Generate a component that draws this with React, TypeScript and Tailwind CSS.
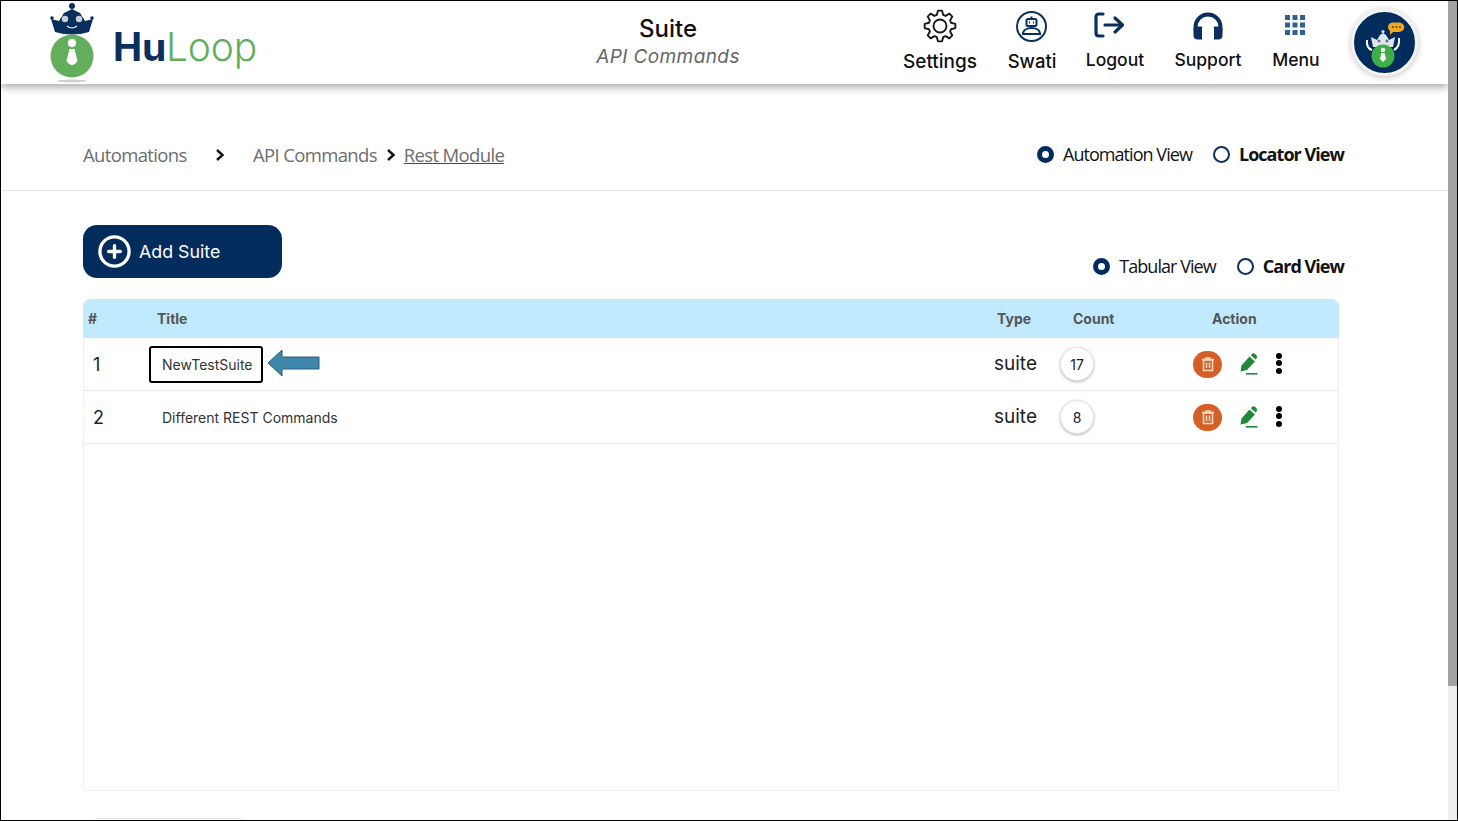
import { CirclePlus } from "lucide-react";

const POP = "font-['Inter','Liberation_Sans',sans-serif]";
const OPEN = "font-['Open_Sans','Liberation_Sans',sans-serif]";

const gearPath = () => {
  const pts: string[] = [];
  const teeth = 8;
  for (let i = 0; i < teeth; i++) {
    const a = (i / teeth) * Math.PI * 2;
    const step = (Math.PI * 2) / teeth;
    const at = (r: number, t: number) => `${(17 + r * Math.cos(t)).toFixed(2)} ${(17 + r * Math.sin(t)).toFixed(2)}`;
    pts.push(`${i === 0 ? "M" : "L"}${at(11.5, a - step * 0.36)}`);
    pts.push(`L${at(15.5, a - step * 0.17)}`);
    pts.push(`L${at(15.5, a + step * 0.17)}`);
    pts.push(`L${at(11.5, a + step * 0.36)}`);
  }
  return pts.join(" ") + " Z";
};

const GearIcon = () => (
  <svg width="34" height="34" viewBox="0 0 34 34" fill="none" stroke="#1a1a1a" strokeWidth="1.900" strokeLinejoin="round">
    <path d={gearPath()} />
    <circle cx="17" cy="17" r="6.500" />
  </svg>
);

const LogoMark = () => (
  <svg width="50" height="84" viewBox="0 0 50 84">
    <circle cx="22" cy="5" r="3" fill="#0b2f5c" />
    <path d="M1 18 L9 20 L14 12 L22 8 L30 12 L35 20 L43 18 L39 31 Q22 36 5 31 Z" fill="#0b2f5c" />
    <circle cx="2" cy="17" r="1.800" fill="#0b2f5c" />
    <circle cx="42" cy="17" r="1.800" fill="#0b2f5c" />
    <circle cx="15" cy="18" r="3.200" fill="#c9d3df" />
    <circle cx="29" cy="18" r="3.200" fill="#c9d3df" />
    <path d="M17 25 Q22 29 27 25" stroke="#fff" strokeWidth="1.200" fill="none" />
    <circle cx="22" cy="55" r="21.500" fill="#62ae5c" />
    <circle cx="22" cy="42" r="4.200" fill="#fff" />
    <path d="M19.500 48 L24.500 48 L27.500 60 Q22 68 16.500 60 Z" fill="#fff" />
    <ellipse cx="22" cy="80" rx="15" ry="1.500" fill="#d0d0d0" />
  </svg>
);

const SwatiIcon = () => (
  <svg width="33" height="33" viewBox="0 0 33 33" fill="none" stroke="#0b2f5c" strokeWidth="2" className="mr-[2px]">
    <circle cx="16.500" cy="16.500" r="14.500" />
    <rect x="11.500" y="9" width="10" height="7" rx="1.500" />
    <path d="M16.500 6.500v2.500" />
    <path d="M14 12.500h1M18 12.500h1" />
    <path d="M8 24c0-4 4-6 8.500-6s8.500 2 8.500 6z" />
  </svg>
);

const LogoutIcon = () => (
  <svg width="31" height="26" viewBox="0 0 31 26" fill="none" stroke="#0b2f5c" strokeWidth="3.200" strokeLinecap="round" strokeLinejoin="round" className="mr-[12px] mb-[2px]">
    <path d="M9 2H5Q2 2 2 5v16Q2 24 5 24H9" />
    <path d="M11 13h17" />
    <path d="M21 6l7.500 7-7.500 7" />
  </svg>
);

const HeadsetIcon = () => (
  <svg width="32" height="28" viewBox="0 0 32 28" fill="#0b2f5c">
    <path d="M3.500 19V15a12.500 12.500 0 0 1 25 0v4" fill="none" stroke="#0b2f5c" strokeWidth="4" />
    <path d="M1.500 18.500Q1.500 14.500 6 14.500h4v13H6Q1.500 27.500 1.500 23z" />
    <path d="M30.500 18.500Q30.500 14.500 26 14.500h-4v13h4Q30.500 27.500 30.500 23z" />
  </svg>
);

const MenuIcon = () => (
  <svg width="22" height="22" viewBox="0 0 22 22" fill="#2f5f93" className="mr-[2px] mb-[2px]">
    {[1, 8.500, 16].map((y) =>
      [1, 8.500, 16].map((x) => <rect key={`${x}-${y}`} x={x} y={y} width="5" height="5" />),
    )}
  </svg>
);

const Avatar = () => (
  <div className="w-[67px] h-[67px] rounded-full bg-[#022c5c] border-[3px] border-[#f4f4f4] shadow-[0_1px_6px_rgba(0,0,0,0.25)] flex items-center justify-center">
    <svg width="56" height="56" viewBox="1 1 56 56">
      <g transform="translate(-3 2)">
        <path d="M35 11a5 4.500 0 0 1 5-4.500h6a5 4.500 0 0 1 0 9.500h-6l-3 3 0-4a5 4.500 0 0 1-2-4z" fill="#f0a81e" />
        <path d="M39 11h9" stroke="#5b4300" strokeWidth="1.500" strokeDasharray="2 1.500" />
      </g>
      <path d="M15 23 L21 26 L24 21 L27 19 L30 21 L33 26 L39 23 L37 33 L17 33 Z" fill="#dfe5ec" />
      <circle cx="27" cy="17.500" r="1.600" fill="#dfe5ec" />
      <circle cx="23" cy="27" r="1.500" fill="#5f7690" />
      <circle cx="31" cy="27" r="1.500" fill="#5f7690" />
      <path d="M11 26 Q10 34 16 36M43 24 Q44 33 38 36" stroke="#fff" strokeWidth="2" fill="none" />
      <circle cx="27" cy="42" r="11.500" fill="#3fae49" />
      <circle cx="27" cy="36" r="2.200" fill="#fff" />
      <path d="M25.500 39h3l1.500 6-3 3-3-3z" fill="#fff" />
    </svg>
  </div>
);

const NavItem = ({ icon, label, className, labelClass }: { icon: React.ReactNode; label: string; className: string; labelClass: string }) => (
  <div className={`flex flex-col items-center ${className}`}>
    <div className="h-[36px] flex items-center justify-center">{icon}</div>
    <span className={`font-medium text-[#111] leading-[26px] whitespace-nowrap ${labelClass}`}>{label}</span>
  </div>
);

const Radio = ({ on, label }: { on: boolean; label: string }) => (
  <label className="flex items-center gap-[9px]">
    {on ? (
      <span className="w-[17px] h-[17px] rounded-full border-[5px] border-[#022c5c] bg-white" />
    ) : (
      <span className="w-[17px] h-[17px] rounded-full border-2 border-[#0b2f5c] bg-white" />
    )}
    <span className={`text-[18px] tracking-[-0.95px] text-[#111] whitespace-nowrap ${on ? "" : "font-bold"}`}>{label}</span>
  </label>
);

const TrashBadge = () => (
  <div className="w-[29px] h-[27px] rounded-full bg-[#d65f26] flex items-center justify-center">
    <svg width="14" height="15" viewBox="0 0 14 15" fill="none" stroke="#fbdccb" strokeWidth="1.500">
      <path d="M1 2.500h12" />
      <path d="M5 2V1h4v1" />
      <path d="M2.500 3h9v10.500h-9z" />
      <path d="M5.500 5.500v5.500M8.500 5.500v5.500" />
    </svg>
  </div>
);

const PenIcon = () => (
  <svg width="18" height="22" viewBox="0 0 18 22">
    <path d="M0.500 18.500 L1.500 12.500 L9.500 3.500 L15 8.500 L7 17 Z" fill="#20883a" />
    <path d="M10.800 2.200 L12.500 0.600 Q13.800 -0.200 15 0.800 L16.600 2.400 Q17.600 3.700 16.600 5 L16 6.800 Z" fill="#20883a" />
    <path d="M6 20.800h11.500" stroke="#20883a" strokeWidth="1.600" />
  </svg>
);

const Dots = () => (
  <div className="flex flex-col gap-[1.500px]">
    <span className="w-[6px] h-[6px] rounded-full bg-black" />
    <span className="w-[6px] h-[6px] rounded-full bg-black" />
    <span className="w-[6px] h-[6px] rounded-full bg-black" />
  </div>
);

const Chevron = () => (
  <svg width="10" height="14" viewBox="0 0 10 14" fill="none" stroke="#111" strokeWidth="2.400">
    <path d="M2 2l5.500 5-5.500 5" />
  </svg>
);

const rows = [
  { id: 1, title: "NewTestSuite", count: 17, marked: true },
  { id: 2, title: "Different REST Commands", count: 8, marked: false },
];

export default function App() {
  return (
    <div className={`w-[1458px] h-[821px] overflow-hidden flex border border-black bg-white ${POP}`}>
      <div className="flex-1 min-w-0 flex flex-col">
        {/* Header */}
        <header className="h-[83px] shrink-0 flex items-start bg-white shadow-[0_3px_8px_rgba(0,0,0,0.35)]">
          <div className="w-[50px] ml-[49px] shrink-0">
            <LogoMark />
          </div>
          <div className="ml-[13px] mt-[21px] text-[39px] leading-[50px] tracking-[-0.2px] whitespace-nowrap w-[160px]">
            <span className="font-bold text-[#0b2f5c]">Hu</span>
            <span className="font-light text-[#62ae5c]">Loop</span>
          </div>
          <div className="ml-[260px] w-[270px] pt-[12px] flex flex-col items-center">
            <span className="text-[24px] leading-[32px] font-medium text-[#111]">Suite</span>
            <span className="text-[19px] leading-[24px] italic tracking-[0.4px] text-[#666]">API Commands</span>
          </div>
          <div className="flex items-start pt-[7px]">
            <NavItem className="w-[90px] ml-[92px]" labelClass="text-[19px] mt-[5px]" label="Settings" icon={<GearIcon />} />
            <NavItem className="w-[60px] ml-[17px]" labelClass="text-[18.500px] mt-[4px]" label="Swati" icon={<SwatiIcon />} />
            <NavItem className="w-[70px] ml-[18px]" labelClass="text-[17.500px] mt-[3px]" label="Logout" icon={<LogoutIcon />} />
            <NavItem className="w-[80px] ml-[18px]" labelClass="text-[17.500px] mt-[3px]" label="Support" icon={<HeadsetIcon />} />
            <NavItem className="w-[60px] ml-[18px]" labelClass="text-[17.500px] mt-[3px]" label="Menu" icon={<MenuIcon />} />
            <div className="ml-[25px] mt-[1px]">
              <Avatar />
            </div>
          </div>
        </header>

        {/* Breadcrumb */}
        <div className={`h-[107px] shrink-0 pl-[82px] pr-[104px] pt-[57px] border-b border-[#e6e6e6] flex items-start justify-between ${OPEN}`}>
          <div className="flex items-center text-[18.500px] tracking-[-0.65px] leading-[27px] text-[#6d6d6d]">
            <span className="w-[132px]">Automations</span>
            <span className="w-[38px]">
              <Chevron />
            </span>
            <span>API Commands</span>
            <span className="ml-[9px] mr-[8px]">
              <Chevron />
            </span>
            <span className="underline decoration-[#2f4f70]">Rest Module</span>
          </div>
          <div className="flex items-center gap-[21px] h-[27px]">
            <Radio on label="Automation View" />
            <Radio on={false} label="Locator View" />
          </div>
        </div>

        {/* Content */}
        <div className="pl-[82px] pr-[109px] flex-1 min-h-0 flex flex-col">
          <div className="flex items-start justify-between pt-[34px]">
            <button className="w-[199px] h-[53px] rounded-[14px] bg-[#022c5c] text-white flex items-center pl-[14px] gap-[7px]">
              <CirclePlus size={35} strokeWidth={2.300} color="#fff" />
              <span className="text-[17.800px] leading-none">Add Suite</span>
            </button>
            <div className={`flex items-center gap-[21px] mt-[28px] mr-[-5px] ${OPEN}`}>
              <Radio on label="Tabular View" />
              <Radio on={false} label="Card View" />
            </div>
          </div>

          <div className="mt-[19px] h-[492px] shrink-0 border border-[#efefef] rounded-t-[8px]">
            <div className="h-[39px] -mx-px -mt-px bg-[#c2eaff] rounded-t-[8px] grid grid-cols-[74px_840px_76px_119px_1fr] items-center text-[14px] font-bold text-[#555]">
              <span className="pl-[5px]">#</span>
              <span>Title</span>
              <span>Type</span>
              <span>Count</span>
              <span className="pl-[20px]">Action</span>
            </div>
            {rows.map((r) => (
              <div key={r.id} className="h-[53px] border-b border-[#e9e9e9] grid grid-cols-[65px_845px_66px_133px_1fr] items-center">
                <span className="pl-[9px] text-[18px] text-[#222]">{r.id}</span>
                <div className="flex items-center">
                  {r.marked ? (
                    <>
                      <span className="h-[37px] w-[114px] border-2 border-black rounded-[3px] pl-[11px] flex items-center text-[14px] text-[#333]">{r.title}</span>
                      <svg width="54" height="30" viewBox="0 0 54 30" className="ml-[4px] mb-[3px]">
                        <path d="M1 15 L15 2 L15 9 L52 9 L52 21 L15 21 L15 28 Z" fill="#3f86ab" stroke="#2d5d82" strokeWidth="1" />
                      </svg>
                    </>
                  ) : (
                    <span className="pl-[13px] text-[14px] text-[#333]">{r.title}</span>
                  )}
                </div>
                <span className="text-[19px] text-[#222]">suite</span>
                <div>
                  <span className="w-[34px] h-[34px] rounded-full bg-white border border-[#e5e5e5] shadow-[0_1px_3px_rgba(0,0,0,0.3)] flex items-center justify-center text-[14px] text-[#222]">
                    {r.count}
                  </span>
                </div>
                <div className="flex items-center">
                  <TrashBadge />
                  <div className="ml-[18px]">
                    <PenIcon />
                  </div>
                  <div className="ml-[18px] mb-[2px]">
                    <Dots />
                  </div>
                </div>
              </div>
            ))}
          </div>

          {/* pagination box, cut off at the bottom of the window */}
          <div className="mt-[27px] ml-[10px] w-[152px] h-[20px] shrink-0 border border-[#e5e5e5] rounded-[5px]" />
        </div>
      </div>

      {/* Scrollbar */}
      <div className="w-[9px] shrink-0 bg-[#efefef]">
        <div className="h-[685px] bg-[#a3a3a3]" />
      </div>
    </div>
  );
}
